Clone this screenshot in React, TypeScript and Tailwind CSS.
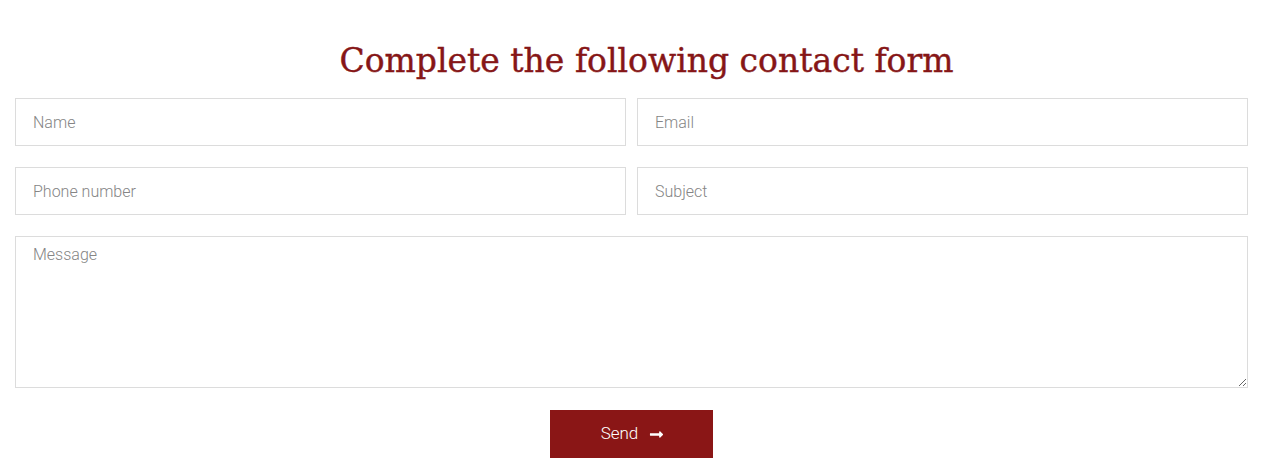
import { FaLongArrowAltRight } from "react-icons/fa";

const inputCls =
  "h-12 w-full border border-[#dcdcdc] bg-white px-[17px] text-base font-light text-[#555] placeholder:text-[#858585] outline-none";

export default function App() {
  return (
    <div className="min-h-[470px] bg-white pl-[15px] pr-[22px]" style={{ fontFamily: "Roboto, 'Liberation Sans', sans-serif" }}>
      <h1
        className="pt-[39px] pb-[15px] pl-[30px] text-center text-[33px] leading-[44px] text-[#861617] [-webkit-text-stroke:0.4px_#861617]"
        style={{ fontFamily: "'DejaVu Serif', 'Liberation Serif', serif" }}
      >
        Complete the following contact form
      </h1>

      <form className="flex flex-col">
        <div className="grid grid-cols-2 gap-x-[11px] gap-y-[21px]">
          <input className={inputCls} placeholder="Name" />
          <input className={inputCls} placeholder="Email" />
          <input className={inputCls} placeholder="Phone number" />
          <input className={inputCls} placeholder="Subject" />
        </div>
        <textarea
          className="mt-[21px] h-[152px] w-full border border-[#dcdcdc] bg-white px-[17px] py-[6px] text-base font-light text-[#555] placeholder:text-[#858585] outline-none"
          placeholder="Message"
        />
        <div className="mt-[22px] flex justify-center">
          <button
            type="button"
            className="flex h-12 w-[163px] items-center justify-center gap-[11px] bg-[#8a1616] pl-[2px] text-[17px] font-light text-white"
          >
            Send
            <FaLongArrowAltRight size={15} />
          </button>
        </div>
      </form>
    </div>
  );
}
